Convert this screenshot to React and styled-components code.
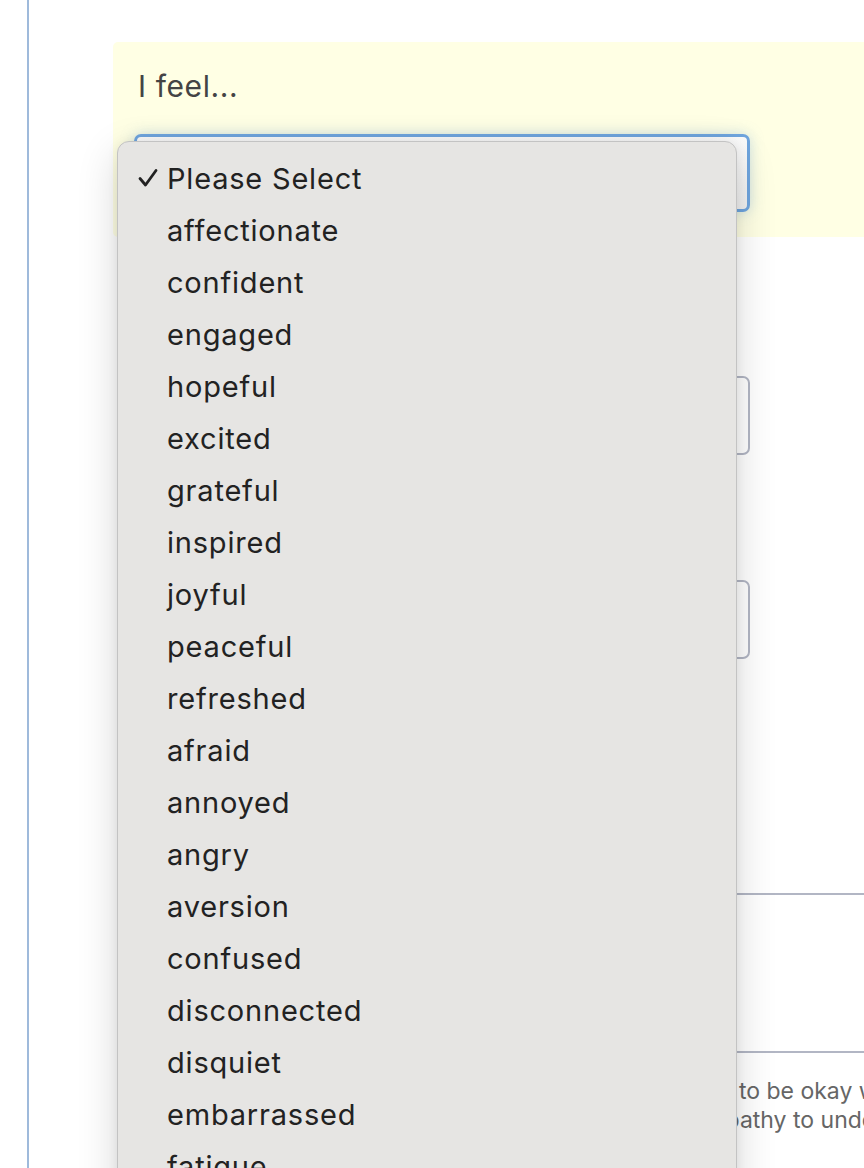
import React from 'react';
import styled, { createGlobalStyle } from 'styled-components';

const FEELINGS = [
  'affectionate', 'confident', 'engaged', 'hopeful', 'excited', 'grateful',
  'inspired', 'joyful', 'peaceful', 'refreshed', 'afraid', 'annoyed', 'angry',
  'aversion', 'confused', 'disconnected', 'disquiet', 'embarrassed', 'fatigue',
  'pain', 'sad', 'tense',
];

const Global = createGlobalStyle`
  html, body {
    margin: 0;
    padding: 0;
    background: #fff;
    font-family: Inter, "Noto Sans", "Liberation Sans", sans-serif;
  }
`;

const Check = () => (
  <svg width="20" height="20" viewBox="0 0 20 20" fill="none">
    <path d="M2 10.5 L7.5 17 L18 2.5" stroke="#222" strokeWidth="2.8" strokeLinecap="round" strokeLinejoin="round" />
  </svg>
);

const App = () => (
  <>
    <Global />
    <Page>
      <Rail>
        <Panel>
          <Label>I feel...</Label>
          <SelectWrap>
            <SelectBox />
            <Menu>
              <Option>
                <Tick><Check /></Tick>
                Please Select
              </Option>
              {FEELINGS.map((f) => (
                <Option key={f}>
                  <Tick />
                  {f}
                </Option>
              ))}
            </Menu>
          </SelectWrap>
        </Panel>

        <Form>
          <Field>
            <FieldLabel>Because I need...</FieldLabel>
            <Input />
          </Field>
          <Field>
            <FieldLabel>Would you be willing...</FieldLabel>
            <Input />
          </Field>
          <Notes>
            <NotesBox />
            <Help>
              Take a moment. It is normal not to always want or need to be okay with it,
              <br />
              and try to give yourself some more time, and some empathy to understand it.
            </Help>
          </Notes>
        </Form>
      </Rail>
    </Page>
  </>
);

const Page = styled.div`
  width: 864px;
  height: 1168px;
  overflow: hidden;
  position: relative;
`;

const Rail = styled.div`
  margin-left: 27px;
  min-height: 100%;
  border-left: 2px solid #9fbadb;
  padding: 42px 0 0 84px;
  box-sizing: border-box;
`;

const Panel = styled.div`
  width: 800px;
  box-sizing: border-box;
  background: #ffffe4;
  border-radius: 5px 0 0 5px;
  padding: 22px 0 25px 21px;
`;

const Label = styled.div`
  font-size: 30px;
  letter-spacing: 0.6px;
  line-height: 44px;
  color: #444;
  padding-left: 4px;
  margin-bottom: 26px;
`;

const SelectWrap = styled.div`
  position: relative;
  width: 616px;
`;

const SelectBox = styled.div`
  height: 78px;
  box-sizing: border-box;
  border: 3px solid #6fa5de;
  border-radius: 7px;
  background: linear-gradient(#fbfbfb, #f1f1f1);
  box-shadow: 0 0 14px rgba(111, 165, 222, 0.35);
`;

const Menu = styled.div`
  position: absolute;
  top: 7px;
  left: -17px;
  width: 620px;
  box-sizing: border-box;
  padding: 10px 0;
  background: #e6e5e3;
  border: 1px solid #c3c3c3;
  border-radius: 12px;
  box-shadow: 0 12px 40px rgba(0, 0, 0, 0.16), 0 0 12px rgba(0, 0, 0, 0.06);
  z-index: 10;
`;

const Option = styled.div`
  display: flex;
  align-items: center;
  height: 52px;
  padding-left: 20px;
  font-size: 29px;
  letter-spacing: 0.8px;
  color: #222;
  white-space: nowrap;
`;

const Tick = styled.span`
  width: 29px;
  display: flex;
  align-items: center;
`;

const Form = styled.div`
  padding: 14px 0 0 21px;
`;

const Field = styled.div`
  width: 616px;
  padding-top: 78px;
`;

const FieldLabel = styled.div`
  font-size: 22px;
  line-height: 30px;
  color: #444;
  margin-bottom: 17px;
`;

const Input = styled.div`
  height: 79px;
  box-sizing: border-box;
  border: 2px solid #b2b6c4;
  border-radius: 7px;
  background: #fff;
`;

const Notes = styled.div`
  padding-top: 234px;
  width: 900px;
`;

const NotesBox = styled.div`
  height: 160px;
  box-sizing: border-box;
  border: 2px solid #b2b6c4;
  border-radius: 7px;
`;

const Help = styled.p`
  margin: 24px 0 0;
  font-size: 23px;
  line-height: 29px;
  color: #666;
  white-space: nowrap;
`;

export default App;
